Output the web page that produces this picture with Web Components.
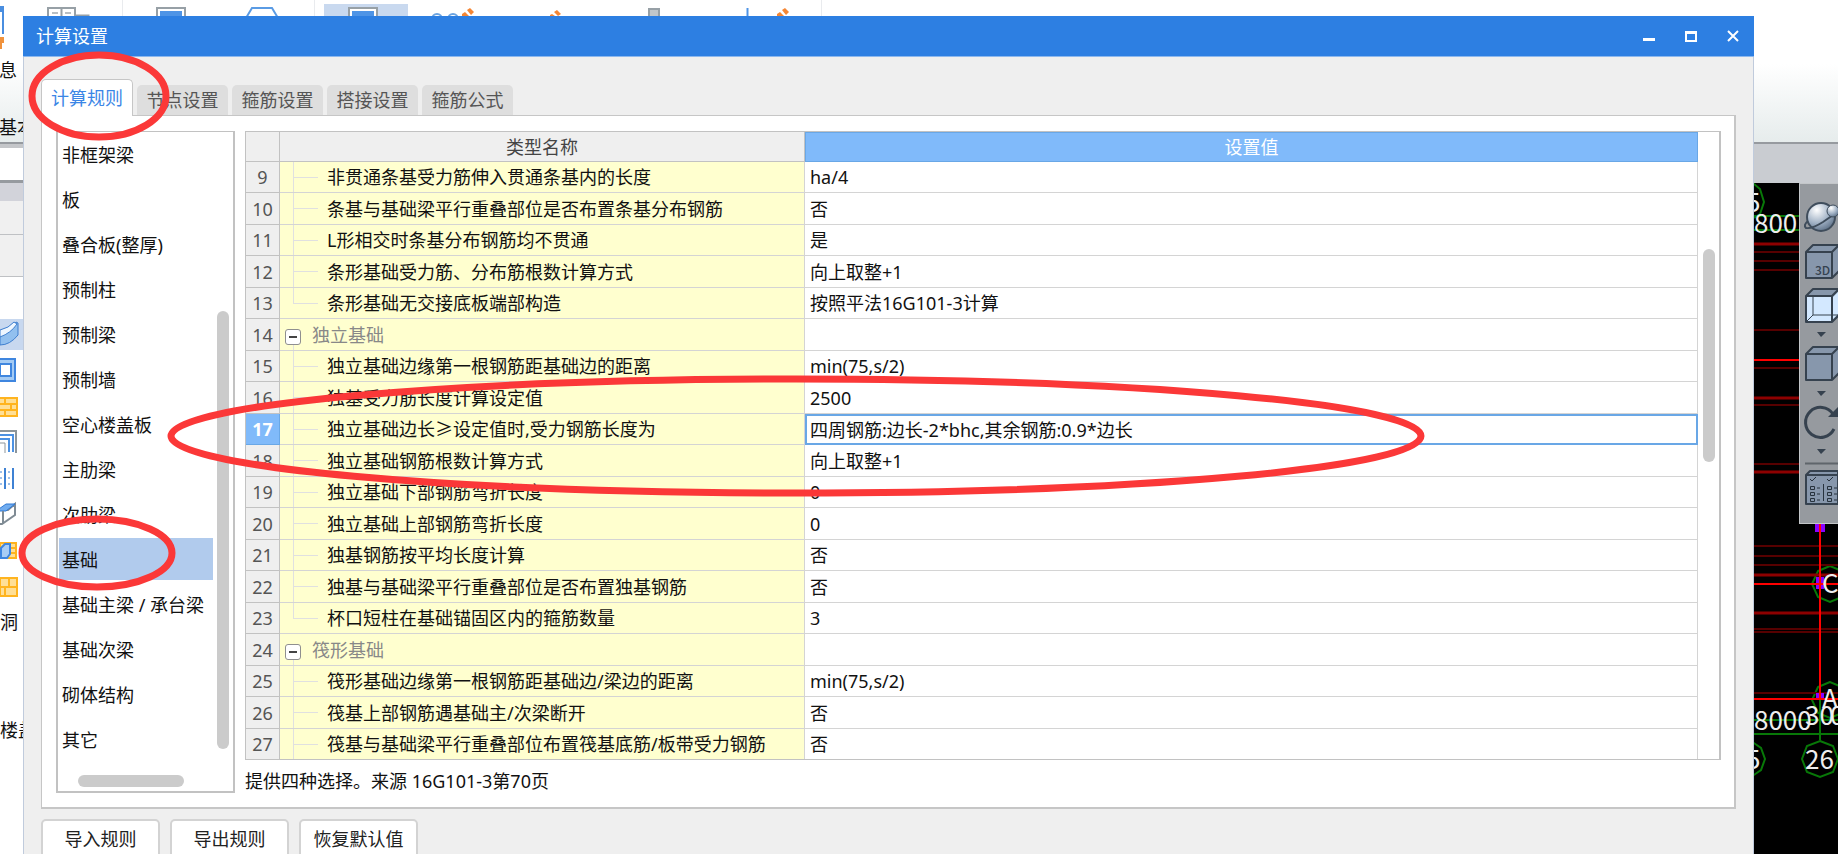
<!DOCTYPE html>
<html lang="zh-CN">
<head>
<meta charset="utf-8">
<title>计算设置</title>
<style>
  html, body { height: 100%; margin: 0; }
  body { font: 18px/24px "Noto Sans", "Noto Sans CJK SC", sans-serif; color: #111; background: #fff; overflow: hidden; }
</style>
</head>
<body>
<calc-workspace></calc-workspace>

<script>
const define = (name, html, setup) => {
  const template = document.createElement('template');
  template.innerHTML = html;
  customElements.define(name, class extends HTMLElement {
    constructor() {
      super();
      this.attachShadow({ mode: 'open' }).append(template.content.cloneNode(true));
    }
    connectedCallback() { if (setup) setup(this, this.shadowRoot); }
  });
};

/* Ribbon strip of the host application */
define('app-ribbon', `
<style>
  :host { display: block; height: 142px; border-bottom: 2px solid #969a9f; background: linear-gradient(#fff 45%, #e6ecec); overflow: hidden; }
  svg { display: block; }
</style>
<svg width="900" height="60" fill="none" aria-hidden="true">
  <path d="M0 7h3v27" stroke="#4a8ee0" stroke-width="2"/><path d="M0 7h3v5H0z" fill="#4a8ee0"/>
  <path d="M0 37h4v6H0zM0 43h2v6H0z" fill="#f0923c"/>
  <path d="M48 20V8h27v12M61.500 8v12M75.500 15.500h14" stroke="#97a0a6" stroke-width="2"/>
  <path d="M52 13h6M65 13h6" stroke="#b9bfc3" stroke-width="2"/>
  <path d="M122.500 0v20M314.500 0v20M821.500 0v20" stroke="#e9ebee"/>
  <path d="M157 20V8h28v12" stroke="#97a0a6" stroke-width="2"/><path d="M160 11h22v8h-22z" fill="#4e94e6"/>
  <path d="M246 18l6-10h20l6 10" stroke="#5a9be4" stroke-width="2"/>
  <path d="M324 4h84v16h-84z" fill="#c9d9ef"/>
  <path d="M348 7h30v12h-30z" fill="#fff"/><path d="M349 20V8h28v12" stroke="#97a0a6" stroke-width="2"/><path d="M352 11h22v8h-22z" fill="#4e94e6"/>
  <circle cx="437" cy="19" r="5" stroke="#6aa3e0" stroke-width="2"/><circle cx="453" cy="19" r="5" stroke="#6aa3e0" stroke-width="2"/>
  <g fill="#f58634"><path d="M467 10l3-2 4 4-3 3zM462 14l3-2 4 4H462z"/><path d="M554 12l3-2 4 4-3 2zM550 15l2-1 3 2h-5z"/><path d="M782 10l3-2 4 4-3 3zM777 14l3-2 4 4h-7z"/></g>
  <path d="M649 20V9h10v11" fill="#c2c7ca" stroke="#97a0a6" stroke-width="2"/>
  <path d="M747.500 8v12" stroke="#4e94e6" stroke-width="2"/>
</svg>`);

/* Left palette, mostly hidden behind the dialog */
define('side-rail', `
<style>
  :host { display: flex; flex-direction: column; width: 60px; background: #fff; white-space: nowrap; }
  .gap { height: 4px; background: #c4c6c9; }
  .field { height: 32px; }
  .head { height: 18px; border-top: 3px solid #969a9f; background: #d2d3da; }
  .tabs { height: 33px; background: #f0f0f0; border-bottom: 1px solid #bfc1c4; }
  .tabs.low { height: 41px; margin-bottom: 40px; }
  svg { display: block; }
  .text { padding-top: 11px; height: 97px; }
</style>
<div class="gap"></div><div class="field"></div><div class="head"></div><div class="tabs"></div><div class="tabs low"></div>
<svg width="60" height="282" fill="none" aria-hidden="true">
  <path d="M0 2h60v31H0z" fill="#c8d8ef"/>
  <path d="M0 17q10-3 16-12l2 1v12q-8 10-18 10z" fill="#92c0ef" stroke="#3f7fcf"/><path d="M0 13q9-2 14-8l3 2q-6 9-17 13z" fill="#eef6ff" stroke="#3f7fcf"/>
  <path d="M-6 42H15v22H-6z" fill="#a4cbf4" stroke="#3f86df" stroke-width="2"/><path d="M0 47h11v12H0z" fill="#fff" stroke="#3f86df" stroke-width="2"/>
  <path d="M0 80h17v19H0z" fill="#ffdf96"/><path d="M0 81h18M0 87h17M0 93h17M0 99h18M17 80v19M5 81v6M11 87v6M5 93v6" stroke="#ffb41f" stroke-width="2"/>
  <path d="M0 114h16v22" stroke="#8c959b" stroke-width="2"/><path d="M0 118h13v17M0 122h9v13" stroke="#4c91e2" stroke-width="2"/><path d="M0 126h5v10" stroke="#8c959b"/>
  <path d="M5 151v21M13 151v21" stroke="#3f82d4" stroke-width="2"/><path d="M0 155h16M0 161h16M0 167h16" stroke="#3f82d4" stroke-dasharray="2 2"/>
  <path d="M0 193h8l7-6v11L2 207H0" fill="#fff" stroke="#7f8b94" stroke-width="2"/><path d="M-4 194l10-7h9l-9 7z" fill="#70acef" stroke="#2f78d4"/><path d="M3 194v13" stroke="#7f8b94" stroke-width="2"/>
  <path d="M0 226h16v15H0z" fill="#ffdf96" stroke="#ffb41f" stroke-width="2"/><path d="M10 231h6M10 236h6" stroke="#ffb41f" stroke-width="2"/><path d="M1 231l4-4h5v10l-3 4H1z" fill="#a8cdf5" stroke="#3f86df" stroke-width="2"/>
  <path d="M0 261h17v18H0z" fill="#ffdf96" stroke="#ffb41f" stroke-width="2"/><path d="M0 270h17M9 261v9M5 270v9" stroke="#ffb41f" stroke-width="2"/>
</svg>
<div class="text">洞</div><div class="text">楼盖</div>`);

/* Drawing area with dimension marks and the view toolbar */
define('drawing-canvas', `
<style>
  :host { display: block; width: 84px; background: #000; border-top: 39px solid #c9ccd1; font-size: 26px; font-family: "Noto Sans CJK SC", sans-serif; overflow: hidden; }
  svg { display: block; }
  text { fill: #eee; font-weight: 400; }
  .cube { fill: #8797ac; stroke: #36424f; stroke-width: 2; stroke-linejoin: round; }
</style>
<svg width="84" height="671" fill="none" role="img" aria-label="图纸">
  <g stroke="#087808" stroke-width="2"><path d="M0 33h84M0 47h84M0 537h84M0 551h84M66 516v41"/>
    <path d="M-6 1H0l6 5 4 13-4 12-6 4"/><path d="M-8 558h5l10 7 4 11-4 11-10 7"/>
    <path d="M66 558l13 5 5 13-5 13-13 5-13-5-5-13 5-13z"/>
    <path d="M76 383l-12 5-6 13 6 13 12 5 12-5V388zM76 499l-12 5-6 13 6 13 12 5 12-5v-26z"/></g>
  <g stroke="#8d0000" stroke-width="3"><path d="M0 61h84M0 215h84M0 289h84M0 392h84M0 430h84"/></g>
  <g stroke="#560000" stroke-width="2"><path d="M0 69h84M0 78h84M0 87h84M0 185h84M0 222h84M0 281h84M0 363h84M0 373h84M0 382h84M0 446h84M0 449h84M0 510h84"/></g>
  <path d="M0 147h84" stroke="#a00"/>
  <path d="M61 341h10v8H61zM62 394h8v12h-8zM62 510h8v7h-8z" fill="#8a00ff"/>
  <path d="M0 177h84M0 401h84M0 516h84M66 341v176" stroke="#f00" stroke-width="2"/>
  <text x="-8" y="29">5</text><text x="0" y="50">800</text>
  <text x="68" y="410">C</text><text x="68" y="525">A</text>
  <text x="0" y="547">8000</text><text x="51" y="542">30</text><text x="76" y="542">0</text>
  <text x="-8" y="586">5</text><text x="51" y="586">26</text>
  <path d="M45 0h39v341H45z" fill="#969a9f"/><path d="M45.500 341V.500H84M45 340.500h39" stroke="#c3c6c9"/>
  <defs><radialGradient id="ball" cx=".35" cy=".25" r=".8"><stop offset="0" stop-color="#fff"/><stop offset=".6" stop-color="#9fb0c4"/><stop offset="1" stop-color="#5c6f86"/></radialGradient></defs>
  <circle cx="67" cy="34" r="14" fill="url(#ball)" stroke="#3f4d5c" stroke-width="2"/>
  <path d="M54 38q-5 4-2 7 6 1 17-6l13-9" stroke="#3f4d5c" stroke-width="2"/>
  <circle cx="79" cy="28" r="6" fill="url(#ball)" stroke="#3f4d5c"/>
  <path class="cube" d="M52 69h26v26H52zM52 69l7-7h26l-7 7zM78 69l7-7v26l-7 7z"/>
  <text x="61" y="92" style="font-size:12px;font-weight:500;fill:#36424f">3D</text>
  <path class="cube" d="M52 113h26v26H52zM52 113l7-7h26l-7 7zM78 113l7-7v26l-7 7z"/>
  <path d="M53 114h24v24H53zM79 114l6-6v22l-6 6z" fill="#d3e8ff"/><path d="M59 114v18h26M59 132l-6 6" stroke="#36424f"/>
  <path class="cube" d="M52 171h26v26H52zM52 171l7-7h26l-7 7zM78 171l7-7v26l-7 7z"/>
  <path d="M63 149h9l-5 5zM63 208h9l-5 5zM63 266h9l-5 5z" fill="#36424f"/>
  <path d="M80 246a15 15 0 1 1-1-15" stroke="#36424f" stroke-width="3"/><path d="M84 224v10H74z" fill="#36424f"/>
  <path d="M51 280.500h33" stroke="#5f656b" stroke-width="2"/>
  <path class="cube" d="M52 292h32v29H52zM52 292l4-4h28v4z"/>
  <path d="M56 296l2 2 4-4M73 296l2 2 4-4M56.500 303.500h4v3h-4zM56.500 309.500h4v3h-4zM56.500 315.500h4v3h-4zM73.500 303.500h4v3h-4zM73.500 309.500h4v3h-4zM73.500 315.500h4v3h-4zM63 305h3M63 311h3M63 317h3M80 305h3M80 311h3M80 317h3M69.500 301v17" stroke="#27323d"/>
</svg>`);

/* Window frame with title bar and body slot */
define('dialog-window', `
<style>
  :host { display: block; box-sizing: border-box; background: #efefef; border-right: 1px solid #c0cbdc; border-left: 1px solid #c0cbdc; }
  header { display: flex; align-items: center; height: 40px; margin: 0 -1px; padding: 0 0 0 13px; background: #2d7fe2; border-bottom: 1px solid #8cb8ee; color: #fff; }
  h1 { flex: 1; margin: 0; font-size: 18px; font-weight: 400; line-height: 24px; }
  button { width: 42px; height: 30px; padding: 0; border: 0; background: none; }
  svg { display: block; margin: auto; }
</style>
<header><h1><slot name="title"></slot></h1>
  <button aria-label="最小化"><svg width="12" height="12"><path d="M0 8h12v3H0z" fill="#fff"/></svg></button>
  <button aria-label="最大化"><svg width="12" height="12"><path d="M1 2v9h10V2" fill="none" stroke="#fff" stroke-width="2"/><path d="M0 1h12v3H0z" fill="#fff"/></svg></button>
  <button aria-label="关闭"><svg width="12" height="12"><path d="M1 1l10 10M11 1L1 11" stroke="#fff" stroke-width="2"/></svg></button>
</header>
<slot></slot>`);

/* Tabs */
define('tab-strip', `
<style>
  :host { display: flex; align-items: flex-end; gap: 4px; height: 37px; margin-bottom: -1px; }
  button { width: 91px; height: 31px; padding: 0; border: 0; border-bottom: 1px solid #c6c6c6; border-radius: 5px 5px 0 0; background: #dedede; color: #555; font: inherit; line-height: 30px; }
  button[aria-selected=true] { width: 92px; height: 37px; line-height: 36px; background: #fff; border: 1px solid #c6c6c6; border-bottom: 0; color: #3b86e6; }
</style>`, (host, root) => {
  host.setAttribute('role', 'tablist');
  host.getAttribute('items').split(',').forEach((label, i) => {
    const b = document.createElement('button');
    b.setAttribute('role', 'tab');
    b.setAttribute('aria-selected', i === 0);
    b.textContent = label;
    root.append(b);
  });
});

/* Component categories */
define('category-list', `
<style>
  :host { display: block; position: relative; box-sizing: border-box; width: 179px; border: 2px solid #c2c2c2; border-width: 1px 2px 2px; background: #fff; overflow: hidden; }
  ul { margin: 0; padding: 1px 0 0 1px; list-style: none; width: 154px; white-space: nowrap; }
  li { height: 42px; padding: 0 3px; margin-bottom: 3px; line-height: 44px; }
  li[aria-selected=true] { background: #b1cbed; }
  i { position: absolute; border-radius: 6px; background: #cbcbcb; }
  .v { width: 12px; right: 4px; top: 179px; bottom: 42px; }
  .h { height: 12px; left: 20px; width: 106px; bottom: 4px; }
</style>
<ul role="listbox" aria-label="构件类型"></ul><i class="v"></i><i class="h"></i>`, (host, root) => {
  const ul = root.querySelector('ul');
  host.getAttribute('items').split(',').forEach(label => {
    const li = document.createElement('li');
    li.setAttribute('role', 'option');
    li.setAttribute('aria-selected', label === host.getAttribute('selected'));
    li.textContent = label;
    ul.append(li);
  });
});

/* Rules grid */
define('rules-table', `
<style>
  :host { display: block; position: relative; border: 1px solid #c2c2c2; border-right-width: 2px; padding-right: 21px; background: #fff; }
  table { width: 100%; table-layout: fixed; border-collapse: separate; border-spacing: 0; }
  th, td { box-sizing: border-box; height: 31px; padding: 0; border: solid #d4d4d4; border-width: 0 1px 1px 0; font-weight: 400; line-height: 24px; text-align: left; white-space: nowrap; overflow: hidden; }
  tbody tr:nth-child(even) > * { height: 32px; }
  tbody tr:last-child > * { height: 30px; border-bottom: 0; }
  .n { width: 34px; }
  .name { width: 525px; }
  thead th { height: 30px; text-align: center; background: #efefef; color: #444; border-color: #c2c2c2; }
  thead th.value { background: #80bafa; border: 1px solid #69a7e6; color: #fff; }
  tbody th { background: #efefef; color: #555; border-color: #c2c2c2; text-align: center; }
  .label { background: #ffffcf; position: relative; padding-left: 47px; }
  td.value { padding-left: 5px; }
  .label::before { content: ""; position: absolute; left: 13px; top: 0; bottom: -1px; width: 24px; border-left: 1px solid #e0e0e0; }
  .label::after { content: ""; position: absolute; left: 13px; top: 15px; width: 25px; height: 1px; background: #e0e0e0; }
  .last .label::before { bottom: 50%; }
  .group .label { padding-left: 5px; color: #888; }
  .group .label::before { top: 24px; }
  .group .label::after { display: none; }
  button { position: relative; box-sizing: border-box; width: 16px; height: 16px; margin: 0 11px 0 0; padding: 3px; border: 1px solid #8f8f8f; border-radius: 3px; background: #fff; vertical-align: 1px; line-height: 8px; font-size: 8px; }
  button svg { display: block; }
  .current th { background: #80bafa; color: #fff; font-weight: 700; border-color: #69a7e6; }
  .current .value { border: 2px solid #69a7e6; padding-left: 3px; }
  i { position: absolute; right: 4px; top: 117px; width: 12px; height: 213px; border-radius: 6px; background: #cbcbcb; }
</style>
<table><thead><tr><th class="n"></th><th class="name">类型名称</th><th class="value">设置值</th></tr></thead><tbody></tbody></table><i></i>`, (host, root) => {
  const rows = [
    ['非贯通条基受力筋伸入贯通条基内的长度', 'ha/4'],
    ['条基与基础梁平行重叠部位是否布置条基分布钢筋', '否'],
    ['L形相交时条基分布钢筋均不贯通', '是'],
    ['条形基础受力筋、分布筋根数计算方式', '向上取整+1'],
    ['条形基础无交接底板端部构造', '按照平法16G101-3计算', 'last'],
    ['独立基础', '', 'group'],
    ['独立基础边缘第一根钢筋距基础边的距离', 'min(75,s/2)'],
    ['独基受力筋长度计算设定值', '2500'],
    ['独立基础边长≥设定值时,受力钢筋长度为', '四周钢筋:边长-2*bhc,其余钢筋:0.9*边长', 'current'],
    ['独立基础钢筋根数计算方式', '向上取整+1'],
    ['独立基础下部钢筋弯折长度', '0'],
    ['独立基础上部钢筋弯折长度', '0'],
    ['独基钢筋按平均长度计算', '否'],
    ['独基与基础梁平行重叠部位是否布置独基钢筋', '否'],
    ['杯口短柱在基础锚固区内的箍筋数量', '3', 'last'],
    ['筏形基础', '', 'group'],
    ['筏形基础边缘第一根钢筋距基础边/梁边的距离', 'min(75,s/2)'],
    ['筏基上部钢筋遇基础主/次梁断开', '否'],
    ['筏基与基础梁平行重叠部位布置筏基底筋/板带受力钢筋', '否']
  ];
  const toggle = '<button aria-label="折叠"><svg width="8" height="8"><path d="M0 4h8" stroke="#444" stroke-width="2"/></svg></button>';
  root.querySelector('tbody').innerHTML = rows.map(([name, value, kind = ''], i) =>
    `<tr class="${kind}"><th scope="row">${i + 9}</th><td class="label">${kind === 'group' ? toggle : ''}${name}</td><td class="value">${value}</td></tr>`).join('');
});

/* Footer button */
define('push-button', `
<style>
  :host { display: block; }
  button { width: 119px; height: 40px; padding: 0; border: 2px solid #d3d3d3; border-radius: 5px; background: #fff; color: #222; font: inherit; }
</style>
<button><slot></slot></button>`);

/* Red review marks laid over the window */
define('review-marks', `
<style>
  :host { display: block; position: absolute; inset: 0; pointer-events: none; }
  svg { display: block; width: 100%; height: 100%; }
</style>
<svg fill="none" stroke="#fb3838" stroke-width="7" aria-hidden="true">
  <ellipse cx="99" cy="96" rx="67" ry="41"/><ellipse cx="97" cy="553" rx="75" ry="34"/><ellipse cx="796" cy="436" rx="625" ry="57"/>
</svg>`);

define('calc-workspace', `
<style>
  :host { display: grid; grid-template: auto 1fr / 1fr; position: relative; height: 100%; overflow: hidden; }
  .back { display: flex; justify-content: space-between; min-height: 0; overflow: hidden; }
  dialog-window { position: absolute; left: 23px; right: 84px; top: 16px; }
  .caption { position: absolute; left: -1px; top: 58px; }
  .caption.group { top: 115px; }
  .body { padding: 22px 17px 0; }
  .panel { display: grid; grid-template-columns: auto 1fr; column-gap: 10px; padding: 15px 13px 14px 14px; background: #fff; border: 1px solid #c6c6c6; border-right-width: 2px; border-bottom-width: 2px; }
  .hint { margin: 9px 0 0; line-height: 24px; }
  .actions { display: flex; gap: 10px; padding: 10px 0; }
</style>
<app-ribbon></app-ribbon>
<div class="back"><side-rail></side-rail><drawing-canvas></drawing-canvas></div>
<div class="caption">息</div><div class="caption group">基本</div>
<dialog-window>
  <span slot="title">计算设置</span>
  <div class="body">
    <tab-strip items="计算规则,节点设置,箍筋设置,搭接设置,箍筋公式"></tab-strip>
    <div class="panel">
      <category-list selected="基础" items="非框架梁,板,叠合板(整厚),预制柱,预制梁,预制墙,空心楼盖板,主肋梁,次肋梁,基础,基础主梁 / 承台梁,基础次梁,砌体结构,其它"></category-list>
      <div><rules-table></rules-table><p class="hint">提供四种选择。来源 16G101-3第70页</p></div>
    </div>
    <div class="actions"><push-button>导入规则</push-button><push-button>导出规则</push-button><push-button>恢复默认值</push-button></div>
  </div>
</dialog-window>
<review-marks></review-marks>`);
</script>
</body>
</html>
